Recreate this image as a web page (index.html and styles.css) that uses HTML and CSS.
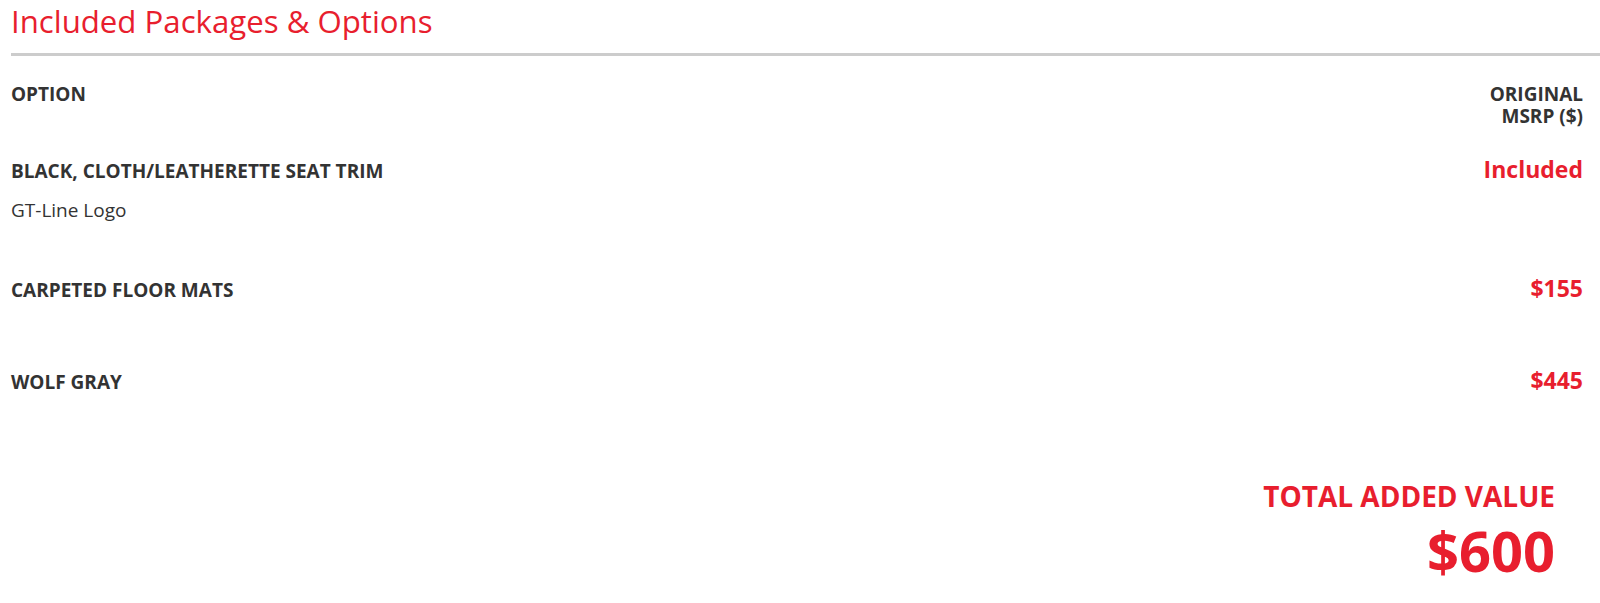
FILE: index.html
```html
<!DOCTYPE html>
<html lang="en">
<head>
  <meta charset="UTF-8">
  <meta name="viewport" content="width=device-width, initial-scale=1.0">
  <title>Included Packages &amp; Options</title>
  <link rel="stylesheet" href="styles.css">
</head>
<body>
  <div class="page">
    <h1 class="section-title">Included Packages &amp; Options</h1>

    <div class="options">
      <div class="options-head">
        <div class="head-name">OPTION</div>
        <div class="head-price">ORIGINAL MSRP ($)</div>
      </div>

      <div class="option-row">
        <div class="option-info">
          <div class="option-name">BLACK, CLOTH/LEATHERETTE SEAT TRIM</div>
          <div class="option-desc">GT-Line Logo</div>
        </div>
        <div class="option-price">Included</div>
      </div>

      <div class="option-row">
        <div class="option-info">
          <div class="option-name">CARPETED FLOOR MATS</div>
        </div>
        <div class="option-price">$155</div>
      </div>

      <div class="option-row">
        <div class="option-info">
          <div class="option-name">WOLF GRAY</div>
        </div>
        <div class="option-price">$445</div>
      </div>

      <div class="total">
        <div class="total-label">TOTAL ADDED VALUE</div>
        <div class="total-value">$600</div>
      </div>
    </div>
  </div>
</body>
</html>
```

FILE: styles.css
```css
body {
  font-family: "Open Sans", "Liberation Sans", sans-serif;
  margin: 0;
  padding: 0;
  background-color: #fff;
  color: #333;
}
.page {
  padding-left: 11px;
}
.section-title {
  margin: 0;
  font-size: 31.2px;
  font-weight: 400;
  line-height: 42px;
  color: #e81e2e;
  padding-bottom: 11px;
  border-bottom: 3px solid #cccccc;
}
.options {
  padding-right: 17px;
}
.options-head {
  display: flex;
  justify-content: space-between;
  margin-top: 27px;
  font-size: 19px;
  font-weight: 700;
  line-height: 22px;
}
.head-price {
  width: 100px;
  text-align: right;
}
.option-row {
  display: flex;
  justify-content: space-between;
  align-items: flex-start;
  min-height: 43px;
  padding-bottom: 49px;
}
.options-head + .option-row {
  margin-top: 32px;
}
.option-name {
  font-size: 19px;
  font-weight: 700;
  line-height: 24px;
}
.option-desc {
  margin: 15px 0 7px;
  font-size: 19px;
  line-height: 24px;
}
.option-price {
  font-size: 23px;
  font-weight: 700;
  line-height: 20px;
  color: #e81e2e;
}
.total {
  margin-top: 18px;
  padding-right: 28px;
  text-align: right;
  color: #e81e2e;
  font-weight: 700;
}
.total-label {
  font-size: 28px;
  line-height: 32px;
}
.total-value {
  margin-top: 8px;
  font-size: 56px;
  line-height: 60px;
}
```
